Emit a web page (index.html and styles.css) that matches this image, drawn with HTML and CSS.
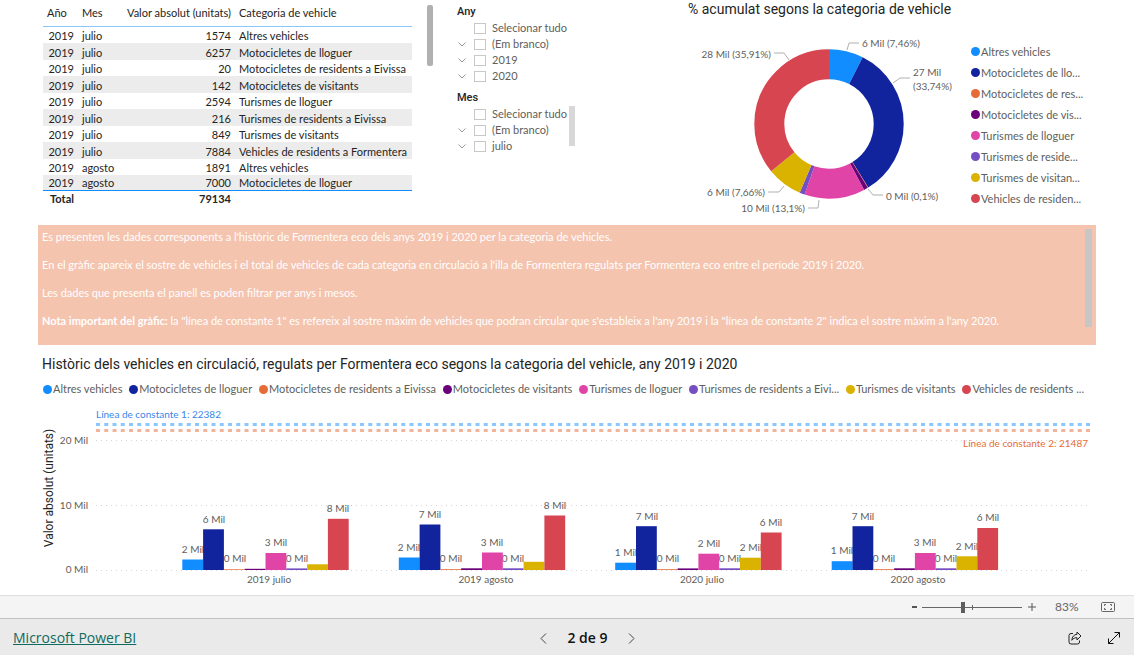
FILE: index.html
```html
<!DOCTYPE html>
<html lang="ca">
<head>
<meta charset="utf-8">
<meta name="viewport" content="width=device-width, initial-scale=1">
<title>Formentera eco - Power BI</title>
<link rel="stylesheet" href="styles.css">
</head>
<body>
<main class="report">
  <div class="top">
    <section class="table-visual">
      <table class="data">
        <colgroup><col class="c-year"><col class="c-month"><col class="c-value"><col></colgroup>
        <thead>
          <tr><th>Año</th><th>Mes</th><th class="num">Valor absolut (unitats)</th><th>Categoria de vehicle</th></tr>
        </thead>
        <tbody>
          <tr><td class="num">2019</td><td>julio</td><td class="num">1574</td><td>Altres vehicles</td></tr>
          <tr><td class="num">2019</td><td>julio</td><td class="num">6257</td><td>Motocicletes de lloguer</td></tr>
          <tr><td class="num">2019</td><td>julio</td><td class="num">20</td><td>Motocicletes de residents a Eivissa</td></tr>
          <tr><td class="num">2019</td><td>julio</td><td class="num">142</td><td>Motocicletes de visitants</td></tr>
          <tr><td class="num">2019</td><td>julio</td><td class="num">2594</td><td>Turismes de lloguer</td></tr>
          <tr><td class="num">2019</td><td>julio</td><td class="num">216</td><td>Turismes de residents a Eivissa</td></tr>
          <tr><td class="num">2019</td><td>julio</td><td class="num">849</td><td>Turismes de visitants</td></tr>
          <tr><td class="num">2019</td><td>julio</td><td class="num">7884</td><td>Vehicles de residents a Formentera</td></tr>
          <tr><td class="num">2019</td><td>agosto</td><td class="num">1891</td><td>Altres vehicles</td></tr>
          <tr><td class="num">2019</td><td>agosto</td><td class="num">7000</td><td>Motocicletes de lloguer</td></tr>
        </tbody>
        <tfoot>
          <tr><td class="num">Total</td><td></td><td class="num">79134</td><td></td></tr>
        </tfoot>
      </table>
      <div class="scroll scroll-table"></div>
    </section>

    <section class="slicers">
      <fieldset class="slicer">
        <legend>Any</legend>
        <div class="option"><span class="chev"></span><input type="checkbox" id="y0"><label for="y0">Selecionar tudo</label></div>
        <div class="option"><svg class="chev" viewBox="0 0 8 5"><path d="M.5 .5 4 4 7.500 .5"/></svg><input type="checkbox" id="y1"><label for="y1">(Em branco)</label></div>
        <div class="option"><svg class="chev" viewBox="0 0 8 5"><path d="M.5 .5 4 4 7.500 .5"/></svg><input type="checkbox" id="y2"><label for="y2">2019</label></div>
        <div class="option"><svg class="chev" viewBox="0 0 8 5"><path d="M.5 .5 4 4 7.500 .5"/></svg><input type="checkbox" id="y3"><label for="y3">2020</label></div>
      </fieldset>
      <fieldset class="slicer">
        <legend>Mes</legend>
        <div class="slicer-body">
          <div>
            <div class="option"><span class="chev"></span><input type="checkbox" id="m0"><label for="m0">Selecionar tudo</label></div>
            <div class="option"><svg class="chev" viewBox="0 0 8 5"><path d="M.5 .5 4 4 7.500 .5"/></svg><input type="checkbox" id="m1"><label for="m1">(Em branco)</label></div>
            <div class="option"><svg class="chev" viewBox="0 0 8 5"><path d="M.5 .5 4 4 7.500 .5"/></svg><input type="checkbox" id="m2"><label for="m2">julio</label></div>
          </div>
          <div class="scroll scroll-slicer"></div>
        </div>
      </fieldset>
    </section>

    <section class="donut-visual">
      <h2 class="title">% acumulat segons la categoria de vehicle</h2>
      <div class="donut-row">
        <svg class="donut" viewBox="688 30 272 190" role="img" aria-label="% acumulat segons la categoria de vehicle">
          <g class="ring" transform="rotate(-90 829 124)">
            <circle cx="829" cy="124" r="59.7" pathLength="100" stroke="#118dff" stroke-dasharray="7.46 92.54"/>
            <circle cx="829" cy="124" r="59.7" pathLength="100" stroke="#12239e" stroke-dasharray="33.74 66.26" stroke-dashoffset="-7.46"/>
            <circle cx="829" cy="124" r="59.7" pathLength="100" stroke="#e66c37" stroke-dasharray=".1 99.9" stroke-dashoffset="-41.2"/>
            <circle cx="829" cy="124" r="59.7" pathLength="100" stroke="#6b007b" stroke-dasharray=".9 99.1" stroke-dashoffset="-41.3"/>
            <circle cx="829" cy="124" r="59.7" pathLength="100" stroke="#e044a7" stroke-dasharray="13.1 86.9" stroke-dashoffset="-42.2"/>
            <circle cx="829" cy="124" r="59.7" pathLength="100" stroke="#744ec2" stroke-dasharray="1.13 98.87" stroke-dashoffset="-55.3"/>
            <circle cx="829" cy="124" r="59.7" pathLength="100" stroke="#d9b300" stroke-dasharray="7.66 92.34" stroke-dashoffset="-56.43"/>
            <circle cx="829" cy="124" r="59.7" pathLength="100" stroke="#d64550" stroke-dasharray="35.91 64.09" stroke-dashoffset="-64.09"/>
          </g>
          <g class="leaders">
            <path d="M847 50l2-7h10M893 83l7-5h10M774 53h10l5 7M868 189l5 6h10M768 192h11l5-6M808 208h10l1-8"/>
          </g>
          <g class="label">
            <text x="862" y="47">6 Mil (7,46%)</text>
            <text x="913" y="76">27 Mil</text>
            <text x="913" y="90">(33,74%)</text>
            <text x="771" y="58" text-anchor="end">28 Mil (35,91%)</text>
            <text x="886" y="200">0 Mil (0,1%)</text>
            <text x="765" y="196" text-anchor="end">6 Mil (7,66%)</text>
            <text x="805" y="212" text-anchor="end">10 Mil (13,1%)</text>
          </g>
        </svg>
        <ul class="legend legend-side">
          <li><i class="dot k1"></i>Altres vehicles</li>
          <li><i class="dot k2"></i>Motocicletes de llo...</li>
          <li><i class="dot k3"></i>Motocicletes de res...</li>
          <li><i class="dot k4"></i>Motocicletes de vis...</li>
          <li><i class="dot k5"></i>Turismes de lloguer</li>
          <li><i class="dot k6"></i>Turismes de reside...</li>
          <li><i class="dot k7"></i>Turismes de visitan...</li>
          <li><i class="dot k8"></i>Vehicles de residen...</li>
        </ul>
      </div>
    </section>
  </div>

  <section class="note">
    <div class="note-text">
      <p>Es presenten les dades corresponents a l'històric de Formentera eco dels anys 2019 i 2020 per la categoria de vehicles.</p>
      <p>En el gràfic apareix el sostre de vehicles i el total de vehicles de cada categoria en circulació a l'illa de Formentera regulats per Formentera eco entre el període 2019 i 2020.</p>
      <p>Les dades que presenta el panell es poden filtrar per anys i mesos.</p>
      <p><strong>Nota important del gràfic:</strong> la "línea de constante 1" es refereix al sostre màxim de vehicles que podran circular que s'estableix a l'any 2019 i la "línea de constante 2" indica el sostre màxim a l'any 2020.</p>
    </div>
    <div class="scroll scroll-note"></div>
  </section>

  <section class="history">
    <h2 class="title">Històric dels vehicles en circulació, regulats per Formentera eco segons la categoria del vehicle, any 2019 i 2020</h2>
    <ul class="legend legend-top">
      <li><i class="dot k1"></i>Altres vehicles</li>
      <li><i class="dot k2"></i>Motocicletes de lloguer</li>
      <li><i class="dot k3"></i>Motocicletes de residents a Eivissa</li>
      <li><i class="dot k4"></i>Motocicletes de visitants</li>
      <li><i class="dot k5"></i>Turismes de lloguer</li>
      <li><i class="dot k6"></i>Turismes de residents a Eivi...</li>
      <li><i class="dot k7"></i>Turismes de visitants</li>
      <li><i class="dot k8"></i>Vehicles de residents ...</li>
    </ul>
    <svg class="bars" viewBox="38 400 1058 190" role="img" aria-label="Vehicles en circulació per mes">
      <path class="grid" d="M96 440.500H1090M96 505.500H1090M96 570.500H1090"/>
      <path class="const c1" d="M96 424.500H1092"/>
      <path class="const c2" d="M96 430.500H1092"/>
      <text class="label const1" x="96" y="418">Línea de constante 1: 22382</text>
      <text class="label const2" x="1088" y="447" text-anchor="end">Línea de constante 2: 21487</text>
      <text class="axis" transform="translate(53 488) rotate(-90)" text-anchor="middle">Valor absolut (unitats)</text>
      <g class="label" text-anchor="end">
        <text x="88" y="444">20 Mil</text><text x="88" y="509">10 Mil</text><text x="88" y="573">0 Mil</text>
      </g>
      <g class="label" text-anchor="middle">
        <text x="269" y="583">2019 julio</text><text x="486" y="583">2019 agosto</text><text x="702" y="583">2020 julio</text><text x="918" y="583">2020 agosto</text>
        <text x="193" y="553">2 Mil</text><text x="214" y="523">6 Mil</text><text x="235" y="562">0 Mil</text><text x="276" y="546">3 Mil</text><text x="297" y="562">0 Mil</text><text x="338" y="512">8 Mil</text>
        <text x="409" y="551">2 Mil</text><text x="430" y="518">7 Mil</text><text x="451" y="562">0 Mil</text><text x="492" y="546">3 Mil</text><text x="513" y="562">0 Mil</text><text x="555" y="509">8 Mil</text>
        <text x="626" y="556">1 Mil</text><text x="647" y="520">7 Mil</text><text x="668" y="562">0 Mil</text><text x="709" y="547">2 Mil</text><text x="730" y="562">0 Mil</text><text x="751" y="551">2 Mil</text><text x="771" y="526">6 Mil</text>
        <text x="842" y="554">1 Mil</text><text x="863" y="520">7 Mil</text><text x="884" y="562">0 Mil</text><text x="925" y="546">3 Mil</text><text x="946" y="562">0 Mil</text><text x="967" y="550">2 Mil</text><text x="988" y="521">6 Mil</text>
      </g>
      <g transform="translate(182.300 570) scale(1 -1)">
        <rect class="f1" width="21" height="10.500"/><rect class="f2" x="20.800" width="20.800" height="40.700"/><rect class="f3" x="41.600" width="20.800" height=".7"/><rect class="f4" x="62.400" width="20.800" height="1.200"/><rect class="f5" x="83.200" width="20.800" height="17"/><rect class="f6" x="104" width="20.800" height="1.600"/><rect class="f7" x="124.800" width="20.800" height="5.700"/><rect class="f8" x="145.600" width="20.800" height="51.200"/>
      </g>
      <g transform="translate(398.800 570) scale(1 -1)">
        <rect class="f1" width="21" height="12.500"/><rect class="f2" x="20.800" width="20.800" height="45.500"/><rect class="f3" x="41.600" width="20.800" height=".8"/><rect class="f4" x="62.400" width="20.800" height="1.700"/><rect class="f5" x="83.200" width="20.800" height="17.500"/><rect class="f6" x="104" width="20.800" height="1.700"/><rect class="f7" x="124.800" width="20.800" height="8.200"/><rect class="f8" x="145.600" width="20.800" height="54.500"/>
      </g>
      <g transform="translate(615.200 570) scale(1 -1)">
        <rect class="f1" width="21" height="7.300"/><rect class="f2" x="20.800" width="20.800" height="43.800"/><rect class="f3" x="41.600" width="20.800" height=".8"/><rect class="f4" x="62.400" width="20.800" height="1.600"/><rect class="f5" x="83.200" width="20.800" height="16.300"/><rect class="f6" x="104" width="20.800" height="1.700"/><rect class="f7" x="124.800" width="20.800" height="12.300"/><rect class="f8" x="145.600" width="20.800" height="37.500"/>
      </g>
      <g transform="translate(831.700 570) scale(1 -1)">
        <rect class="f1" width="21" height="8.800"/><rect class="f2" x="20.800" width="20.800" height="43.800"/><rect class="f3" x="41.600" width="20.800" height=".8"/><rect class="f4" x="62.400" width="20.800" height="1.700"/><rect class="f5" x="83.200" width="20.800" height="17"/><rect class="f6" x="104" width="20.800" height="1.700"/><rect class="f7" x="124.800" width="20.800" height="13.700"/><rect class="f8" x="145.600" width="20.800" height="42"/>
      </g>
    </svg>
  </section>
</main>

<div class="zoombar">
  <button class="step" aria-label="Reduir"><svg width="6" height="2" viewBox="0 0 6 2"><path d="M0 1h5" stroke="#555" stroke-width="2"/></svg></button>
  <input class="zoom" type="range" min="0" max="100" value="41" aria-label="Zoom">
  <button class="step plus" aria-label="Ampliar"><svg width="8" height="8" viewBox="0 0 8 8"><path d="M0 4h8M4 0v8" stroke="#555"/></svg></button>
  <output class="percent">83%</output>
  <button class="fit" aria-label="Ajustar a la pàgina"><svg width="14" height="10" viewBox="0 0 14 10" fill="none" stroke="#666"><rect x=".5" y=".5" width="13" height="9" rx="1"/><path d="M5 2.500H3.500v1.500M9 2.500h1.500v1.500M5 7.500H3.500V6M9 7.500h1.500V6"/></svg></button>
</div>
<footer class="footer">
  <a class="brand" href="#">Microsoft Power BI</a>
  <nav class="pager">
    <button aria-label="Pàgina anterior"><svg width="7" height="11" viewBox="0 0 7 11" fill="none" stroke="#444"><path d="M6 .5 1 5.500l5 5"/></svg></button>
    <span>2 de 9</span>
    <button aria-label="Pàgina següent"><svg width="7" height="11" viewBox="0 0 7 11" fill="none" stroke="#444"><path d="m1 .5 5 5-5 5"/></svg></button>
  </nav>
  <div class="actions">
    <button aria-label="Compartir"><svg width="14" height="14" viewBox="0 0 14 14" fill="none" stroke="#222" stroke-linejoin="round"><path d="M5 2.500H3a2 2 0 0 0-2 2V11a2 2 0 0 0 2 2h6.500a2 2 0 0 0 2-2V9.500"/><path d="M9 1l4 4-4 4V6.700C6.500 6.700 5 7.500 3.800 9.300 4 5.800 6 3.500 9 3.300z"/></svg></button>
    <button aria-label="Pantalla completa"><svg width="12" height="12" viewBox="0 0 12 12" fill="none" stroke="#111"><path d="M.5 11.500l11-11M6.500 .5h5v5M.5 6.500v5h5"/></svg></button>
  </div>
</footer>
</body>
</html>
```
FILE: styles.css
```css
:root {
  --ui: Lato, "Open Sans", sans-serif;
  --heading: Roboto, "Liberation Sans", sans-serif;
}
* { box-sizing: border-box; }
body {
  margin: 0;
  min-height: 100vh;
  display: flex;
  flex-direction: column;
  background: #fff;
  color: #252423;
  font: 11px/16px var(--ui);
}
button { border: 0; padding: 0; background: none; display: flex; align-items: center; cursor: pointer; }
svg { display: block; }
ul, p, h2 { margin: 0; padding: 0; list-style: none; }
.report { flex: 1; padding: 0 38px; }
.top { display: grid; grid-template-columns: 395fr 207fr 408fr; gap: 24px; min-height: 225px; }

.table-visual { display: flex; justify-content: space-between; align-items: flex-start; padding-left: 5px; }
.data { width: 369px; border-collapse: separate; border-spacing: 0; table-layout: fixed; white-space: nowrap; }
.c-year { width: 35px; }
.c-month { width: 42px; }
.c-value { width: 115px; }
.data th, .data td { padding: 0 4px; line-height: 16px; text-align: left; font-weight: 400; }
.data .num { text-align: right; }
.data thead th { height: 27px; border-bottom: 1px solid #8ac7ff; }
.data tbody td { height: 16px; padding-top: 1px; line-height: 15px; }
.data tbody tr:nth-child(even) td { height: 17px; background: #ececec; }
.data tbody tr:last-child td { height: 15px; line-height: 14px; }
.data tfoot td { border-top: 1px solid #118dff; height: 17px; font-weight: 700; }
.scroll { flex: none; background: #c6c6c6; }
.scroll-table { width: 6px; height: 61px; margin-top: 5px; border-radius: 2px; background: #b0b0b0; }

.slicer { border: 0; margin: 0 0 6px; padding: 0; min-width: 0; }
.slicers { padding-top: 4px; }
.slicer legend { padding: 0; font: 500 11px/16px var(--heading); }
.option { display: flex; align-items: center; height: 16px; color: #605e5c; }
.chev { width: 8px; height: 5px; margin: 0 8px 0 1px; fill: none; stroke: #999; }
.option input { appearance: none; width: 12px; height: 11px; margin: 0 6px 0 0; border: 1px solid #c8c8c8; background: #fff; }
.slicer-body { display: flex; width: 118px; justify-content: space-between; white-space: nowrap; }
.slicer-body > div:first-child { width: 112px; }
.scroll-slicer { width: 6px; height: 40px; background: #d8d8d8; }

.title { font: 400 14px/18px var(--heading); }
.donut-row { display: flex; align-items: flex-start; padding-top: 12px; }
.donut { flex: 0 1 272px; }
.ring circle { fill: none; stroke-width: 30; }
.leaders path { fill: none; stroke: #b3b0ad; }
.label { font: 10px var(--ui); fill: #605e5c; }
.legend { color: #605e5c; white-space: nowrap; }
.legend li { display: flex; align-items: center; }
.legend-side { padding: 11px 0 0 11px; }
.legend-side li { height: 21px; }
.dot { flex: none; width: 9px; height: 9px; border-radius: 50%; margin-right: 1px; }
.k1 { background: #118dff; } .f1 { fill: #118dff; }
.k2 { background: #12239e; } .f2 { fill: #12239e; }
.k3 { background: #e66c37; } .f3 { fill: #e66c37; }
.k4 { background: #6b007b; } .f4 { fill: #6b007b; }
.k5 { background: #e044a7; } .f5 { fill: #e044a7; }
.k6 { background: #744ec2; } .f6 { fill: #744ec2; }
.k7 { background: #d9b300; } .f7 { fill: #d9b300; }
.k8 { background: #d64550; } .f8 { fill: #d64550; }

.note { display: flex; justify-content: space-between; min-height: 120px; padding: 4px; background: #f5c4af; color: #fff; }
.note p { line-height: 16px; margin-bottom: 12px; }
.scroll-note { width: 7px; height: 98px; }

.history { padding-top: 10px; }
.history .title { padding-left: 4px; }
.legend-top { display: flex; justify-content: space-between; padding: 8px 12px 3px 5px; }
.bars { width: 100%; height: auto; }
.grid { stroke: #d6d6d6; stroke-dasharray: 1 4; }
.const { stroke-width: 3; stroke-dasharray: 4 4.250; }
.c1 { stroke: #8ac7ff; }
.c2 { stroke: #f2b49b; }
.const1 { fill: #3a86e8; }
.const2 { fill: #e66c37; }
.axis { font: 12px var(--heading); fill: #252423; }

.zoombar { display: flex; align-items: center; justify-content: flex-end; height: 23px; padding-right: 19px; border-top: 1px solid #dedede; background: #f4f4f4; color: #666; }
.zoom {
  appearance: none; width: 100px; height: 11px; margin: 0 6px 0 4px;
  background: linear-gradient(#666, #666) 50px 50% / 1px 5px no-repeat, linear-gradient(#666, #666) 0 5px / 100% 1px no-repeat;
}
.zoom::-webkit-slider-thumb { appearance: none; width: 4px; height: 11px; background: #605e5c; }
.plus { margin-right: 19px; }
.percent { font-size: 12px; width: 46px; }
.footer { display: grid; grid-template-columns: 1fr auto 1fr; align-items: center; height: 37px; padding: 2px 14px 0 13px; border-top: 1px solid #c0c0c0; background: #eaeaea; }
.brand { color: #0f6b60; font: 14px/20px "Open Sans", sans-serif; }
.pager { display: flex; gap: 20px; padding-left: 42px; font: 600 14px/20px "Open Sans", sans-serif; color: #111; }
.actions { display: flex; gap: 26px; justify-content: flex-end; align-items: center; }
```
